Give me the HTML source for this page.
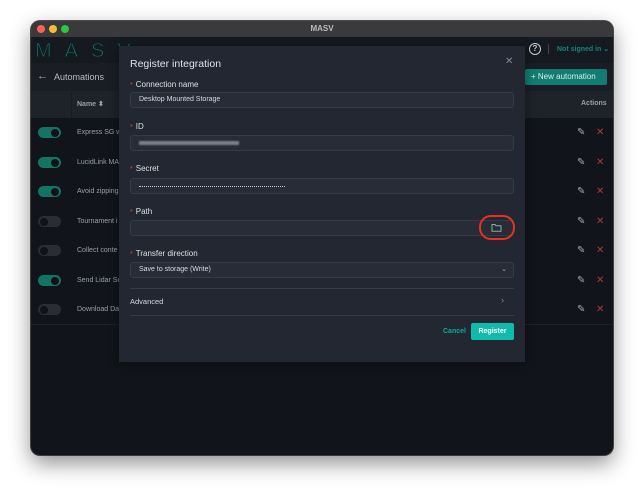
<!DOCTYPE html>
<html><head><style>
*{margin:0;padding:0;box-sizing:border-box}
body{width:644px;height:498px;background:#fff;font-family:"Liberation Sans",sans-serif;position:relative;overflow:hidden}
.win{position:absolute;left:31px;top:21px;width:582px;height:434px;border-radius:9px;overflow:hidden;background:#11141a;box-shadow:0 8px 22px rgba(0,0,0,.45),0 0 0 1px #555}
.tb{position:absolute;left:0;top:0;width:100%;height:16px;background:#3a3a3c;color:#bbb;font-size:8px;font-weight:bold;text-align:center;line-height:16px}
.dot{position:absolute;top:4px;width:8px;height:8px;border-radius:50%}
.a{position:absolute}
.hdr{left:0;top:16px;width:100%;height:26px;background:#151a20}
.sub{left:0;top:42px;width:100%;height:28px;background:#1a1e24}
.th{left:0;top:70px;width:100%;height:27px;background:#1e2229}
.t{color:#9aa0a8;font-size:7px}
.tog{position:absolute;left:7px;width:23px;height:11px;border-radius:6px}
.tog i{position:absolute;top:1.5px;width:8px;height:8px;border-radius:50%;background:#0f1216}
.on{background:#137466}.on i{right:2px}
.off{background:#2a2e34}.off i{left:2px}
.modal{position:absolute;left:119px;top:46px;width:406px;height:316px;background:#222731;box-shadow:0 2px 10px rgba(0,0,0,.4)}
.lbl{position:absolute;left:11px;color:#dde0e4;font-size:8px}
.lbl b{color:#e0433b;font-weight:normal;margin-right:3px;font-size:7px}
.inp{position:absolute;left:11px;width:384px;height:16px;border:1px solid #363c47;border-radius:3px;background:#272c36;color:#d8dbe0;font-size:7px;line-height:14px;padding-left:8px}
.hr{position:absolute;left:11px;width:384px;height:1px;background:#363b45}
</style></head><body>
<div class="win">
 <div class="tb">MASV
  <span class="dot" style="left:6px;background:#fe5f57"></span><span class="dot" style="left:18px;background:#febc2e"></span><span class="dot" style="left:30px;background:#28c840"></span></div>
 <div class="a hdr"></div>
 <svg class="a" style="left:0;top:16px" width="100" height="26"><text x="4" y="20" fill="#0f766e" font-family="Liberation Sans" font-size="20" letter-spacing="13" stroke="#151a20" stroke-width="0.9">MASV</text></svg>
 <div class="a" style="left:498px;top:22px;width:12px;height:12px;border:1.3px solid #ccc;border-radius:50%;color:#ccc;font-size:8px;text-align:center;line-height:10px;font-weight:bold">?</div>
 <div class="a" style="left:517px;top:23px;width:1px;height:10px;background:#444"></div>
 <div class="a" style="left:526px;top:24px;color:#13857a;font-size:7px;font-weight:bold">Not signed in ⌄</div>
 <div class="a sub"></div>
 <div class="a" style="left:6px;top:49px;color:#aab;font-size:11px">←</div>
 <div class="a" style="left:23px;top:51px;color:#b8bcc2;font-size:9px">Automations</div>
 <div class="a" style="left:494px;top:48px;width:82px;height:16px;background:#117d72;border-radius:2px;color:#d7ebe8;font-size:8px;line-height:16px;padding-left:6px">+ New automation</div>
 <div class="a th"></div>
 <div class="a" style="left:40px;top:70px;width:1px;height:27px;background:#181b21"></div>
 <div class="a t" style="left:46px;top:79px;font-weight:bold">Name ⬍</div>
 <div class="a t" style="left:550px;top:79px;font-weight:bold">Actions</div>
 <div class="a" style="left:0;top:303px;width:100%;height:1px;background:#1e2228"></div>
 <div class="tog on" style="top:106px"><i></i></div><div class="a t" style="left:46px;top:108px">Express SG wi</div>
 <div class="tog on" style="top:136px"><i></i></div><div class="a t" style="left:46px;top:138px">LucidLink MA</div>
 <div class="tog on" style="top:165px"><i></i></div><div class="a t" style="left:46px;top:167px">Avoid zipping</div>
 <div class="tog off" style="top:195px"><i></i></div><div class="a t" style="left:46px;top:197px">Tournament i</div>
 <div class="tog off" style="top:224px"><i></i></div><div class="a t" style="left:46px;top:226px">Collect conte</div>
 <div class="tog on" style="top:254px"><i></i></div><div class="a t" style="left:46px;top:256px">Send Lidar Sc</div>
 <div class="tog off" style="top:283px"><i></i></div><div class="a t" style="left:46px;top:285px">Download Dai</div>
 <div class="a" style="left:546px;top:97px;color:#aaa;font-size:10px;line-height:29.5px">✎<br>✎<br>✎<br>✎<br>✎<br>✎<br>✎</div>
 <div class="a" style="left:565px;top:97px;color:#b33a36;font-size:10px;line-height:29.5px">✕<br>✕<br>✕<br>✕<br>✕<br>✕<br>✕</div>
</div>
<div class="modal">
 <div class="a" style="left:11px;top:12px;color:#dfe2e6;font-size:10.5px">Register integration</div>
 <div class="a" style="left:386px;top:10px;color:#888;font-size:10px">✕</div>
 <div class="lbl" style="top:34px"><b>*</b>Connection name</div>
 <div class="inp" style="top:46px">Desktop Mounted Storage</div>
 <div class="lbl" style="top:76px"><b>*</b>ID</div>
 <div class="inp" style="top:89px"><span style="display:inline-block;margin-top:5px;width:100px;height:4px;background:#7a7e85;filter:blur(.8px)"></span></div>
 <div class="lbl" style="top:118px"><b>*</b>Secret</div>
 <div class="inp" style="top:132px"><span style="display:inline-block;margin-top:6px;width:146px;border-top:1px dotted #ccc"></span></div>
 <div class="lbl" style="top:161px"><b>*</b>Path</div>
 <div class="inp" style="top:174px"></div>
 <svg class="a" style="left:372px;top:177px" width="11" height="9" viewBox="0 0 11 9"><path d="M1 1.5h3l1 1.2h5v5.5H1z" fill="none" stroke="#9aa" stroke-width="1"/></svg>
 <div class="a" style="left:360px;top:169px;width:36px;height:25px;border:2px solid #e8321f;border-radius:12px"></div>
 <div class="lbl" style="top:203px"><b>*</b>Transfer direction</div>
 <div class="inp" style="top:216px">Save to storage (Write)<span style="position:absolute;right:6px;top:0;color:#aaa">⌄</span></div>
 <div class="hr" style="top:242px"></div>
 <div class="a" style="left:11px;top:251px;color:#d5d8dc;font-size:7.5px">Advanced</div>
 <div class="a" style="left:382px;top:249px;color:#888;font-size:9px">›</div>
 <div class="hr" style="top:269px"></div>
 <div class="a" style="left:324px;top:282px;color:#12a99b;font-size:7px;font-weight:bold">Cancel</div>
 <div class="a" style="left:352px;top:277px;width:43px;height:17px;background:#0fbcac;border-radius:2px;color:#fff;font-size:7px;font-weight:bold;text-align:center;line-height:17px">Register</div>
</div>
</body></html>
